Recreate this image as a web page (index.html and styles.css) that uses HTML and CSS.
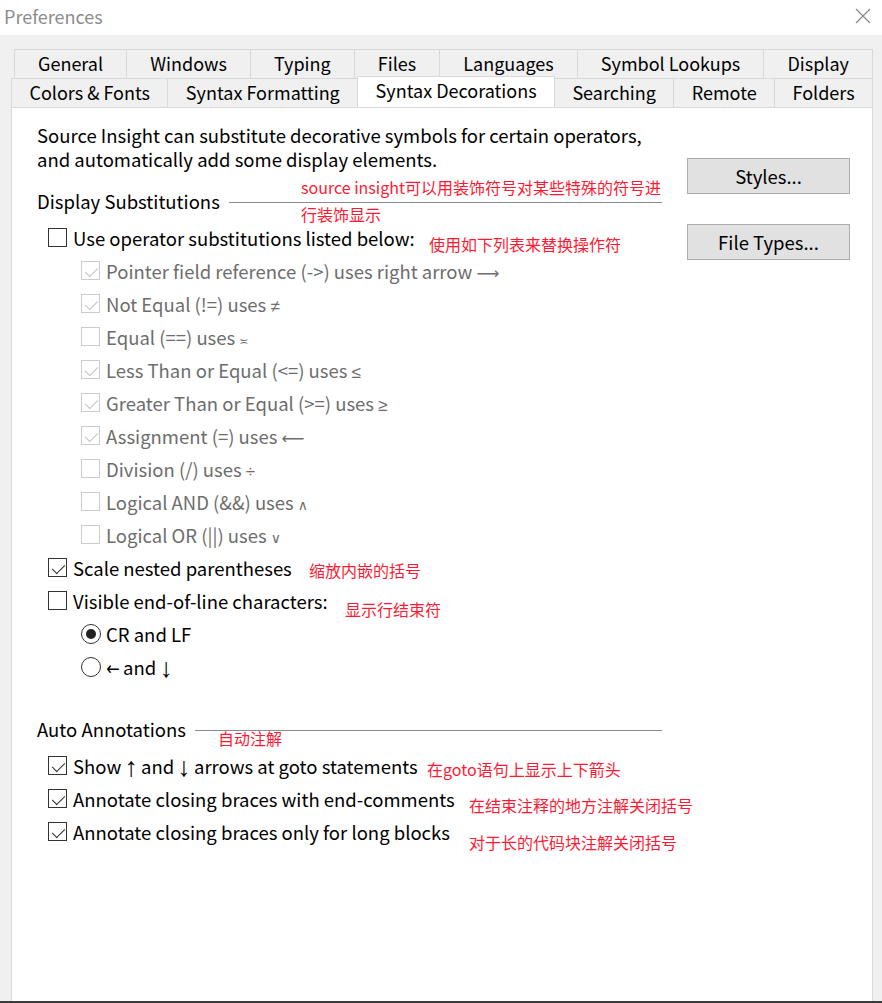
FILE: index.html
```html
<!DOCTYPE html>
<html>
<head>
<meta charset="utf-8">
<title>Preferences</title>
<link rel="stylesheet" href="styles.css">
</head>
<body>
<div class="window">
  <div class="titlebar">
    <span class="title">Preferences</span>
    <svg class="close" width="16" height="16" viewBox="0 0 16 16"><path d="M1 1 L15 15 M15 1 L1 15" stroke="#8a8a8a" stroke-width="1.2" fill="none"/></svg>
  </div>
  <div class="content">
    <div class="tabs">
      <div class="tabrow r1">
        <div class="tab">General</div>
        <div class="tab">Windows</div>
        <div class="tab">Typing</div>
        <div class="tab">Files</div>
        <div class="tab">Languages</div>
        <div class="tab">Symbol Lookups</div>
        <div class="tab">Display</div>
      </div>
      <div class="tabrow r2">
        <div class="tab">Colors &amp; Fonts</div>
        <div class="tab">Syntax Formatting</div>
        <div class="tab active">Syntax Decorations</div>
        <div class="tab">Searching</div>
        <div class="tab">Remote</div>
        <div class="tab">Folders</div>
      </div>
    </div>
    <div class="panel">
      <div class="main">
        <p class="intro">Source Insight can substitute decorative symbols for certain operators,<br>and automatically add some display elements.</p>

        <div class="group"><span>Display Substitutions</span><i class="rule"></i></div>
        <div class="row l1"><span class="box"></span><span>Use operator substitutions listed below:</span></div>
        <div class="row l2 dis"><span class="box chk"></span><span>Pointer field reference (-&gt;) uses right arrow <span class="sym">⟶</span></span></div>
        <div class="row l2 dis"><span class="box chk"></span><span>Not Equal (!=) uses <span class="op">≠</span></span></div>
        <div class="row l2 dis"><span class="box"></span><span>Equal (==) uses <span class="tiny">≍</span></span></div>
        <div class="row l2 dis"><span class="box chk"></span><span>Less Than or Equal (&lt;=) uses <span class="op">≤</span></span></div>
        <div class="row l2 dis"><span class="box chk"></span><span>Greater Than or Equal (&gt;=) uses <span class="op">≥</span></span></div>
        <div class="row l2 dis"><span class="box chk"></span><span>Assignment (=) uses <span class="sym">⟵</span></span></div>
        <div class="row l2 dis"><span class="box"></span><span>Division (/) uses <span class="op">÷</span></span></div>
        <div class="row l2 dis"><span class="box"></span><span>Logical AND (&amp;&amp;) uses <span class="small">∧</span></span></div>
        <div class="row l2 dis"><span class="box"></span><span>Logical OR (||) uses <span class="small">∨</span></span></div>
        <div class="row l1"><span class="box chk"></span><span>Scale nested parentheses</span></div>
        <div class="row l1"><span class="box"></span><span>Visible end-of-line characters:</span></div>
        <div class="row l2"><span class="radio on"></span><span>CR and LF</span></div>
        <div class="row l2"><span class="radio"></span><span><span class="larr">←</span> and <span class="arr">↓</span></span></div>

        <div class="group g2"><span>Auto Annotations</span><i class="rule"></i></div>
        <div class="row l1"><span class="box chk"></span><span>Show <span class="arr">↑</span> and <span class="arr">↓</span> arrows at goto statements</span></div>
        <div class="row l1"><span class="box chk"></span><span>Annotate closing braces with end-comments</span></div>
        <div class="row l1"><span class="box chk"></span><span>Annotate closing braces only for long blocks</span></div>
      </div>
      <div class="side">
        <button class="btn">Styles...</button>
        <button class="btn">File Types...</button>
      </div>

      <div class="note n1">source insight可以用装饰符号对某些特殊的符号进<br>行装饰显示</div>
      <div class="note n2">使用如下列表来替换操作符</div>
      <div class="note n3">缩放内嵌的括号</div>
      <div class="note n4">显示行结束符</div>
      <div class="note n5">自动注解</div>
      <div class="note n6">在goto语句上显示上下箭头</div>
      <div class="note n7">在结束注释的地方注解关闭括号</div>
      <div class="note n8">对于长的代码块注解关闭括号</div>
    </div>
  </div>
</div>
</body>
</html>
```

FILE: styles.css
```css
* { box-sizing: border-box; }
html, body {
  margin: 0;
  padding: 0;
  background: #f0f0f0;
}
body {
  font-family: "Noto Sans CJK SC", "Noto Sans", sans-serif;
  font-size: 18.5px;
  color: #000;
  width: 882px;
  height: 1003px;
  overflow: hidden;
}
.window {
  height: 1003px;
  display: flex;
  flex-direction: column;
  border-bottom: 2px solid #3c3c3c;
}
.titlebar {
  height: 35px;
  background: #fff;
  display: flex;
  align-items: center;
  justify-content: space-between;
  padding: 0 11px 0 4px;
}
.title {
  color: #8c8c8c;
  font-size: 18px;
  line-height: 35px;
  margin-top: -2px;
}
.close { margin-top: -3px; }
.content {
  flex: 1;
  display: flex;
  flex-direction: column;
  padding: 14px 9px 0 11px;
}
.tabs {
  display: flex;
  flex-direction: column;
}
.tabrow {
  display: flex;
  height: 29px;
}
.tabrow.r1 { margin: 0 0 0 3px; }
.tab {
  flex: 1 1 auto;
  text-align: center;
  line-height: 27px;
  padding: 0 14px;
  border: 1px solid #d9d9d9;
  border-right: none;
  border-bottom: none;
  background: #f0f0f0;
  white-space: nowrap;
  font-size: 18px;
}
.tab:last-child { border-right: 1px solid #d9d9d9; }
.tabrow.r2 .tab { position: relative; }
.tab.active {
  background: #fff;
  margin-top: -2px;
  height: 31px;
  line-height: 27px;
  border: 1px solid #d9d9d9;
  border-bottom: none;
  z-index: 2;
  margin-bottom: -1px;
}
.tab.active + .tab { border-left: none; }

.panel {
  position: relative;
  flex: 1;
  background: #fff;
  border: 1px solid #d9d9d9;
  border-bottom: none;
  display: flex;
  padding: 15px 0 0 25px;
}
.main {
  width: 625px;
}
.intro {
  margin: 0;
  line-height: 24px;
}
.group {
  display: flex;
  align-items: center;
  height: 24px;
  margin-top: 18px;
  margin-bottom: 8px;
}
.group.g2 { margin-top: 34px; }
.group .rule {
  flex: 1;
  height: 1px;
  background: #8c8c8c;
  margin-left: 9px;
  margin-top: 2px;
}
.row {
  display: flex;
  align-items: center;
  height: 33px;
  white-space: nowrap;
}
.row.l1 { padding-left: 11px; }
.row.l2 { padding-left: 44px; }
.row.dis { color: #6d6d6d; }
.box {
  width: 19px;
  height: 19px;
  border: 1px solid #333;
  margin-right: 6px;
  flex: none;
  position: relative;
  background: #fff;
}
.dis .box { border-color: #cccccc; }
.box.chk::after {
  content: "";
  position: absolute;
  left: 4px;
  top: 2px;
  width: 10px;
  height: 6px;
  border-left: 1.5px solid #333;
  border-bottom: 1.5px solid #333;
  transform: translate(0px, 3px) rotate(-45deg) scaleX(1.1);
  transform-origin: center;
}
.dis .box.chk::after { border-color: #c4c4c4; }
.radio {
  width: 20px;
  height: 20px;
  border: 1px solid #333;
  border-radius: 50%;
  margin-right: 5px;
  flex: none;
  display: flex;
  align-items: center;
  justify-content: center;
}
.radio.on::after {
  content: "";
  width: 10px;
  height: 10px;
  border-radius: 50%;
  background: #222;
}
.sym { font-family: "DejaVu Sans", sans-serif; font-size: 16px; }
.op { font-family: "Liberation Sans", "DejaVu Sans", sans-serif; font-size: 17px; }
.arr {
  font-family: "Liberation Sans", "DejaVu Sans", sans-serif;
  font-size: 27px;
  line-height: 18px;
  display: inline-block;
  vertical-align: -2px;
  margin: 0 -1px;
}
.larr {
  font-family: "DejaVu Sans", sans-serif;
  font-size: 19px;
  line-height: 18px;
  display: inline-block;
  transform: scaleX(0.85);
  margin: 0 -2px 0 -1px;
}
.tiny { font-size: 11px; font-family: "DejaVu Sans", sans-serif; }
.small { font-size: 14px; font-family: "DejaVu Sans", sans-serif; }

.side {
  margin-left: 25px;
  padding-top: 35px;
  display: flex;
  flex-direction: column;
  gap: 30px;
}
.btn {
  width: 163px;
  height: 36px;
  background: #e1e1e1;
  border: 1px solid #adadad;
  font-family: inherit;
  font-size: 18.5px;
  color: #000;
  padding: 0;
}

.note {
  position: absolute;
  color: #ff1a33;
  font-size: 16px;
  line-height: 27px;
  white-space: nowrap;
}
.n1 { left: 289px; top: 66px; }
.n2 { left: 417px; top: 123px; }
.n3 { left: 297px; top: 449px; }
.n4 { left: 333px; top: 488px; }
.n5 { left: 206px; top: 617px; }
.n6 { left: 415px; top: 648px; }
.n7 { left: 457px; top: 684px; }
.n8 { left: 457px; top: 721px; }
```
